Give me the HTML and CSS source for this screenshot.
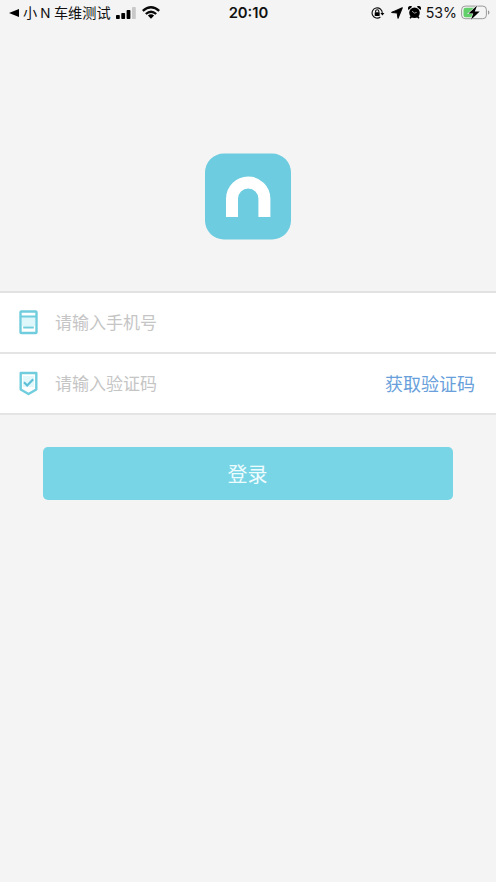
FILE: index.html
```html
<!DOCTYPE html>
<html lang="zh-CN">
<head>
<meta charset="utf-8">
<meta name="viewport" content="width=device-width, initial-scale=1">
<title>登录</title>
<link rel="stylesheet" href="styles.css">
</head>
<body>
<header class="status">
  <div class="status-left">
    <svg class="back" width="10" height="8" viewBox="0 0 10 8"><path d="M0 4 10 0v8z"/></svg>
    <span class="app-name">小<span class="latin">N</span>车维测试</span>
    <svg class="signal" width="20" height="12" viewBox="0 0 20 12"><rect y="8" width="3.8" height="4" rx=".8"/><rect x="5.3" y="6" width="3.8" height="6" rx=".8"/><rect x="10.6" y="3" width="3.8" height="9" rx=".8"/><rect x="16" width="3.8" height="12" rx=".8" fill="#c9c9c9"/></svg>
    <svg class="wifi" width="18" height="13" viewBox="0 0 18 13"><g fill="none" stroke="#080808" stroke-width="2.3"><path d="M.8 4.8Q9-2.2 17.2 4.8"/><path d="M3.8 8Q9 3.4 14.2 8"/></g><path d="M5.9 9.5Q9 7.2 12.1 9.5L9 12.8z"/></svg>
  </div>
  <time class="clock">20:10</time>
  <div class="status-right">
    <svg class="lock" width="14" height="12" viewBox="0 0 14 12"><g fill="none" stroke="#111" stroke-width="1.1"><path d="M11.3 6A5.1 5.1 0 1 0 9.4 10"/><path d="M4.6 5.6V4.3a1.6 1.6 0 0 1 3.2 0v1.3"/></g><rect x="3.7" y="5.2" width="5" height="3.7" rx=".6"/><path d="M9.4 6h4l-2 2.6z"/></svg>
    <svg class="location" width="12" height="12" viewBox="0 0 12 12"><path d="M11.3.7 7 11.2 6.2 6 .7 5.4z" stroke="#080808" stroke-width="1.1" stroke-linejoin="round"/></svg>
    <svg class="alarm" width="13" height="13" viewBox="0 0 13 13"><circle cx="6.5" cy="6.8" r="5.3"/><path d="M.6 3.9A2.3 2.3 0 0 1 4.1.8zM12.4 3.9A2.3 2.3 0 0 0 8.9.8zM2.6 10l1.5 1.2-1.6 1.6-1-1zM10.4 10l-1.5 1.2 1.6 1.6 1-1z"/><path d="M4 5.2 6.5 7.1 8.7 6.4" fill="none" stroke="#ddd" stroke-width=".7"/></svg>
    <span class="percent">53%</span>
    <svg class="battery" width="29" height="15" viewBox="0 0 29 15"><rect x=".6" y="1.1" width="24.8" height="12.6" rx="3.6" fill="none" stroke="#999" stroke-width="1"/><path d="M4.5 2.8H13v9.4H4.5a2 2 0 0 1-2-2V4.8a2 2 0 0 1 2-2z" fill="#63cf6b"/><path d="M27 5.3c2 .8 2 3.6 0 4.4z" fill="#999"/><path d="M16.1.4 7.5 8.5h4.7L10 14.7l8.7-8.2h-4.9z" stroke="#f4f4f4" stroke-width="1.1" paint-order="stroke"/></svg>
  </div>
</header>
<main>
  <svg class="logo" width="86" height="87" viewBox="0 0 86 87"><rect y=".5" width="86" height="86" rx="19" fill="#6dccdf"/><path d="M27 64V45.7a16.2 16.2 0 0 1 32.4 0V64" fill="none" stroke="#fff" stroke-width="12"/></svg>
  <form class="login">
    <div class="fields">
      <label class="row">
        <svg class="icon" width="20" height="25" viewBox="0 0 20 25"><rect x="1.5" y="1.5" width="16" height="21.5" rx=".8" fill="#fff" stroke="#70cddd" stroke-width="2.4"/><path d="M3 7h13v9H3z" fill="#ddf7fa"/><path d="M2 6.5h15M4.2 17.5h10.6" stroke="#70cddd" stroke-width="1.8"/></svg>
        <input type="tel" placeholder="请输入手机号">
      </label>
      <label class="row">
        <svg class="icon" width="20" height="25" viewBox="0 0 20 25"><path d="M1.7 2h15.6v16.5L9.5 23 1.7 18.5z" fill="#fff" stroke="#70cddd" stroke-width="2.4" stroke-linejoin="round"/><path d="M4 5h11v11H4z" fill="#e2f8fb"/><path d="m5 11.2 3.2 3.3 6-6.2" fill="none" stroke="#5dbfd8" stroke-width="2.2"/></svg>
        <input type="text" placeholder="请输入验证码">
        <button class="code" type="button">获取验证码</button>
      </label>
    </div>
    <button class="submit" type="button">登录</button>
  </form>
</main>
</body>
</html>
```
FILE: styles.css
```css
* { box-sizing: border-box; }

body {
  margin: 0;
  min-height: 882px;
  background: #f4f4f4;
  color: #111;
  font-family: "Liberation Sans", "Noto Sans CJK SC", sans-serif;
}

svg { display: block; flex: none; }

.status {
  display: grid;
  grid-template-columns: 1fr auto 1fr;
  align-items: center;
  height: 26px;
  padding: 0 7px 0 9px;
  white-space: nowrap;
}

.status-left, .status-right { display: flex; align-items: center; height: 26px; padding-bottom: 1px; }
.status-right { justify-content: flex-end; }
.app-name {
  margin-left: 4px;
  font: 14.2px/26px "Noto Sans CJK SC", sans-serif;
}
.latin { margin: 0 3.5px 0 3px; font-family: Inter, sans-serif; font-size: 13.5px; }
.signal { margin-left: 5.5px; }
.wifi { margin-left: 5.5px; }
.clock { padding-right: 1px; font: 600 14.8px/25px Inter, sans-serif; }
.lock { margin-right: 6px; }
.alarm { margin-left: 5px; }
.percent { margin-left: 5px; font: 14.2px/26px Inter, sans-serif; }
.battery { margin: 0 -1px 0 4px; }

main { display: flex; flex-direction: column; align-items: center; padding-top: 127px; }
.login { width: 100%; margin-top: 51px; }
.fields { border-top: 2px solid #e2e2e2; }

.row {
  display: flex;
  align-items: center;
  height: 61px;
  padding: 0 21px 0 19px;
  background: #fff;
  border-bottom: 2px solid #e4e4e4;
}

input {
  flex: 1;
  min-width: 0;
  height: 40px;
  margin-left: 16px;
  padding: 0 0 2px;
  border: 0;
  outline: 0;
  background: none;
  color: #333;
  font: 17px "Noto Sans CJK SC", sans-serif;
}
input::placeholder { color: #c5c5c5; opacity: 1; }

button { padding: 0; border: 0; font-family: "Noto Sans CJK SC", sans-serif; }
.code { padding-bottom: 2px; background: none; color: #699fdb; font-size: 18px; }
.submit {
  display: block;
  width: 410px;
  height: 53px;
  margin: 32px 0 0 43px;
  padding-right: 1px;
  border-radius: 5px;
  background: #78d5e5;
  color: #effcff;
  font-size: 20px;
}
```
